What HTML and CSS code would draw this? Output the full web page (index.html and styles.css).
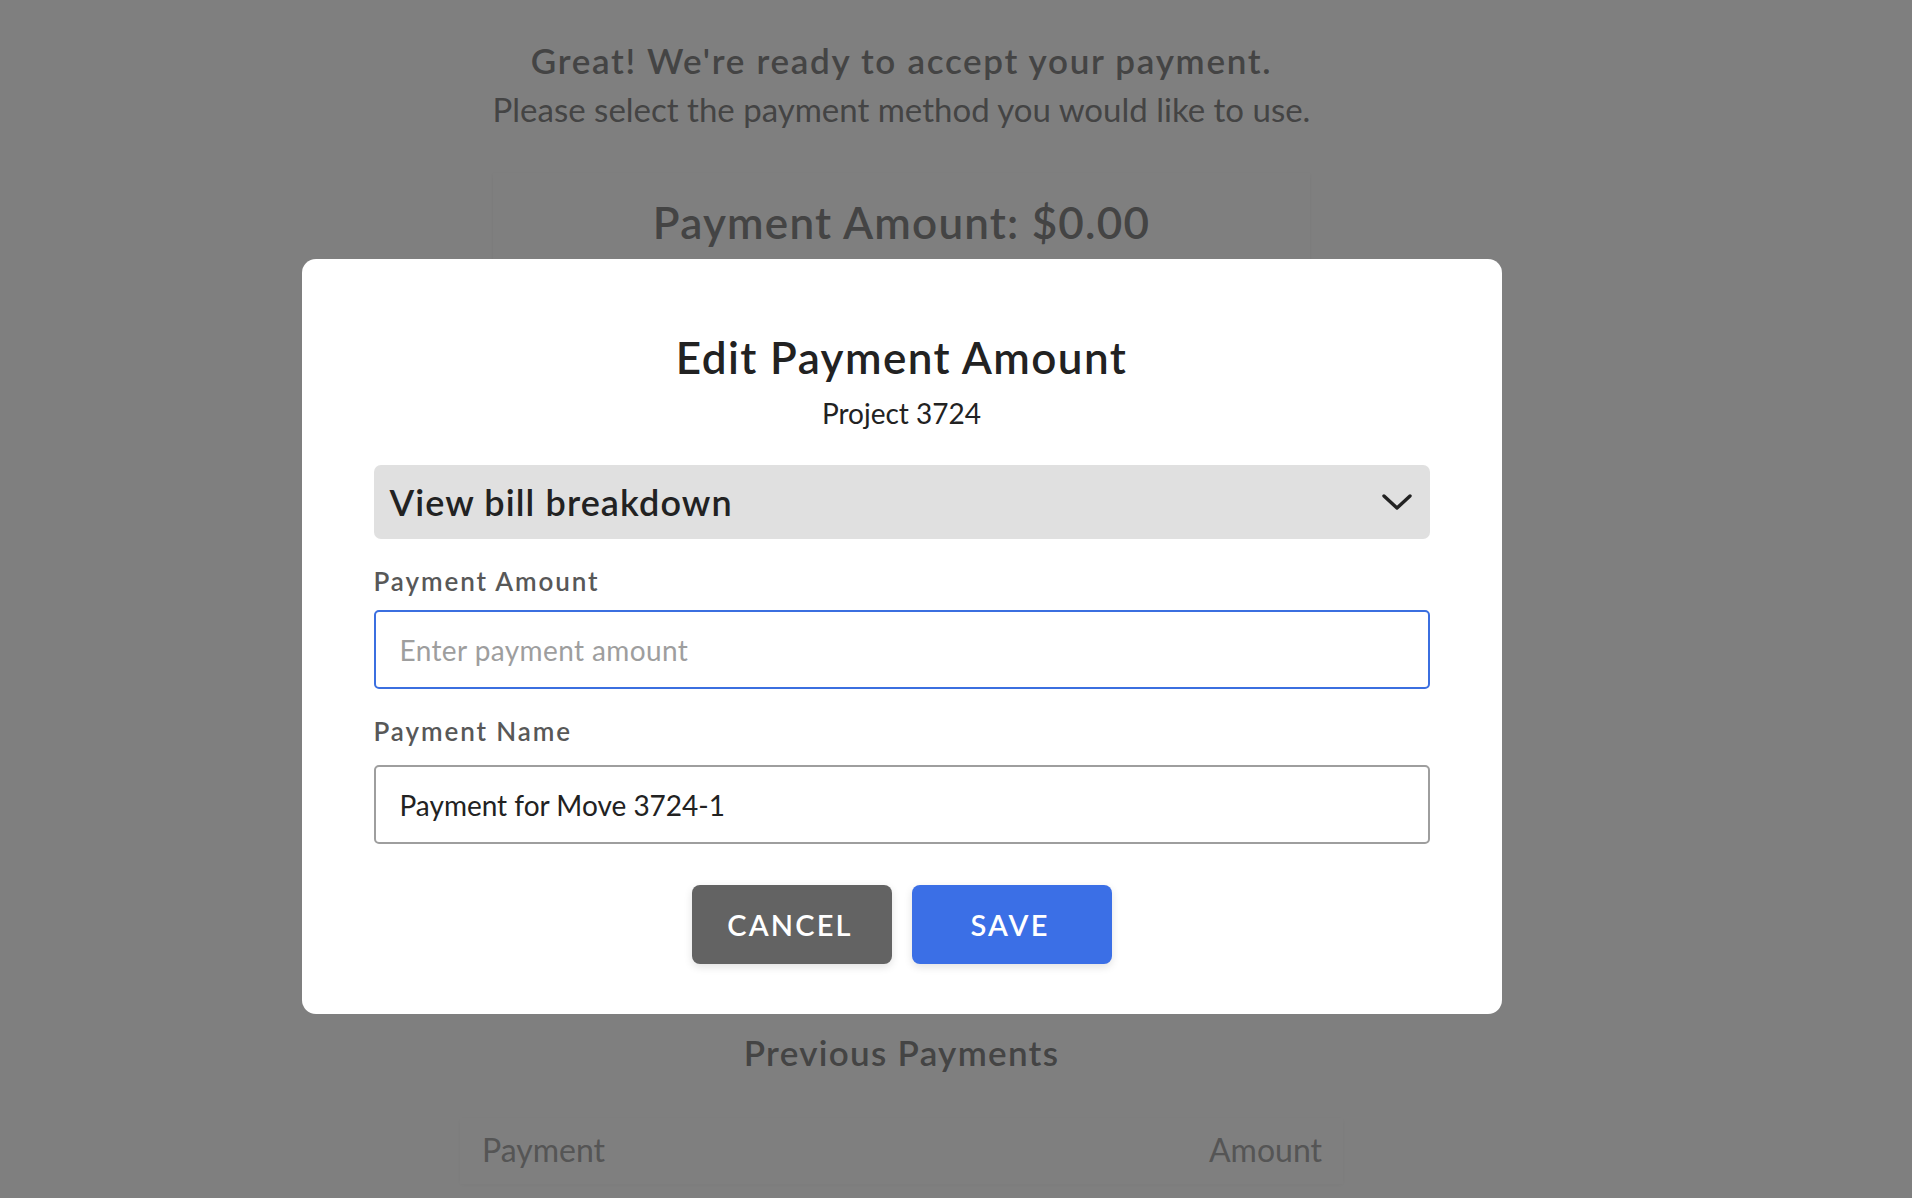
FILE: index.html
```html
<!DOCTYPE html>
<html lang="en">

<head>
    <meta charset="UTF-8">
    <meta name="viewport" content="width=device-width, initial-scale=1.0">
    <title>Payment</title>
    <link rel="stylesheet" href="styles.css">
</head>

<body>
    <div class="page">
        <div class="intro">
            <h2>Great! We're ready to accept your payment.</h2>
            <p>Please select the payment method you would like to use.</p>
        </div>

        <div class="amount-card">
            <h1>Payment Amount: $0.00</h1>
        </div>

        <h3 class="prev-title">Previous Payments</h3>
        <div class="prev-table">
            <div class="prev-head">
                <span>Payment</span>
                <span>Amount</span>
            </div>
        </div>
    </div>

    <!-- edit amount modal -->
    <div class="overlay">
        <div class="modal">
            <h2 class="modal-title">Edit Payment Amount</h2>
            <p class="modal-sub">Project 3724</p>

            <div class="breakdown">
                <span>View bill breakdown</span>
                <svg width="32" height="20" viewBox="0 0 32 20">
                    <path d="M3 4 L16 16 L29 4" fill="none" stroke="#222" stroke-width="3.4" stroke-linecap="round" stroke-linejoin="round" />
                </svg>
            </div>

            <label class="field-label" for="amount">Payment Amount</label>
            <input class="field focus" type="text" id="amount" placeholder="Enter payment amount">

            <label class="field-label" for="pname">Payment Name</label>
            <input class="field second" type="text" id="pname" value="Payment for Move 3724-1">

            <div class="actions">
                <button class="btn cancel">CANCEL</button>
                <button class="btn save">SAVE</button>
            </div>
        </div>
    </div>
</body>

</html>
```

FILE: styles.css
```css
* {
    box-sizing: border-box;
}

body {
    margin: 0;
    padding: 0;
    background-color: #ffffff;
    font-family: Lato, "Noto Sans", sans-serif;
    height: 1198px;
    overflow: hidden;
}

.page {
    width: 1803px;
    display: flex;
    flex-direction: column;
    align-items: center;
    padding-top: 40px;
}

.intro {
    text-align: center;
    color: #888888;
}

.intro h2 {
    margin: 0;
    font-size: 35px;
    line-height: 40px;
    font-weight: 600;
    letter-spacing: 1.7px;
}

.intro p {
    margin: 10px 0 0;
    font-size: 33px;
    line-height: 38px;
}

.amount-card {
    width: 817px;
    height: 830px;
    margin-top: 45px;
    padding-top: 24px;
    box-shadow: 0 1px 4px rgba(0, 0, 0, 0.06);
    text-align: center;
}

.amount-card h1 {
    margin: 0;
    font-size: 44px;
    line-height: 50px;
    font-weight: 600;
    letter-spacing: 1.2px;
    color: #888888;
}

.prev-title {
    margin: 29px 0 0;
    font-size: 35px;
    line-height: 40px;
    font-weight: 600;
    letter-spacing: 1.3px;
    color: #888888;
}

.prev-table {
    width: 883px;
    margin-top: 46px;
    box-shadow: 0 1px 4px rgba(0, 0, 0, 0.04);
}

.prev-head {
    display: flex;
    justify-content: space-between;
    padding: 14px 21px 16px 22px;
    font-size: 32px;
    line-height: 36px;
    color: #aaaaaa;
}

.overlay {
    position: fixed;
    top: 0;
    left: 0;
    right: 0;
    bottom: 0;
    background-color: rgba(0, 0, 0, 0.5);
    display: flex;
    justify-content: center;
    align-items: flex-start;
    padding-top: 259px;
    padding-right: 109px;
}

.modal {
    width: 1200px;
    background: #ffffff;
    border-radius: 14px;
    padding: 74px 72px 50px;
    display: flex;
    flex-direction: column;
}

.modal-title {
    margin: 0;
    text-align: center;
    font-size: 44px;
    line-height: 48px;
    font-weight: 600;
    letter-spacing: 1.4px;
    color: #222222;
}

.modal-sub {
    margin: 17px 0 0;
    text-align: center;
    font-size: 28px;
    line-height: 30px;
    color: #222222;
}

.breakdown {
    margin-top: 37px;
    height: 74px;
    background: #e0e0e0;
    border-radius: 7px;
    display: flex;
    align-items: center;
    justify-content: space-between;
    padding: 0 17px 0 16px;
    font-size: 36px;
    font-weight: 600;
    letter-spacing: 1.1px;
    color: #222222;
}

.field-label {
    margin-top: 27px;
    font-size: 26px;
    line-height: 30px;
    font-weight: 600;
    letter-spacing: 1.9px;
    color: #585858;
}

.field {
    margin-top: 14px;
    height: 79px;
    width: 100%;
    border: 2px solid #9e9e9e;
    border-radius: 5px;
    padding: 0 24px;
    font-family: Lato, "Noto Sans", sans-serif;
    font-size: 28px;
    color: #222222;
    outline: none;
}

.field::placeholder {
    color: #9e9e9e;
    letter-spacing: 0.4px;
}

.field.focus {
    border-color: #3b6fe0;
}

.field.second {
    margin-top: 19px;
}

.actions {
    margin-top: 41px;
    display: flex;
    justify-content: center;
    gap: 20px;
}

.btn {
    width: 200px;
    height: 79px;
    border: none;
    border-radius: 8px;
    color: #ffffff;
    font-family: Lato, "Noto Sans", sans-serif;
    font-size: 29px;
    font-weight: 600;
    letter-spacing: 2.2px;
    padding-left: 3px;
    box-shadow: 0 3px 8px rgba(0, 0, 0, 0.12);
    cursor: pointer;
}

.cancel {
    background-color: #636363;
}

.save {
    background-color: #3b6fe6;
}
```
